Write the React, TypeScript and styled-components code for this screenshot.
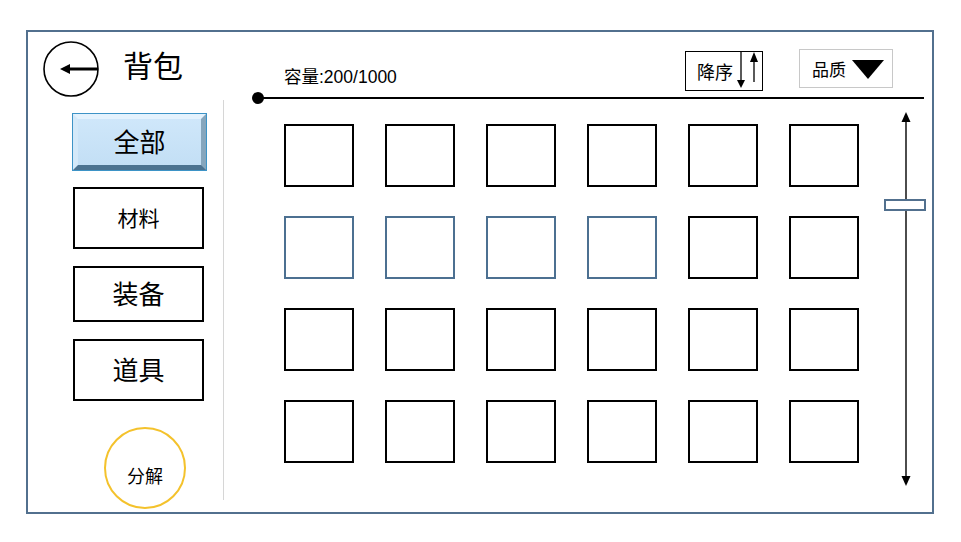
import React from "react";
import styled, { createGlobalStyle } from "styled-components";

const CJK = `"Liberation Sans", "Noto Sans CJK SC", sans-serif`;

const GlobalStyle = createGlobalStyle`
  body {
    margin: 0;
    background: #fff;
    font-family: ${CJK};
    color: #000;
  }
`;

const tabs = [
  { label: "全部", active: true, tall: false, size: 26 },
  { label: "材料", active: false, tall: true, size: 21 },
  { label: "装备", active: false, tall: false, size: 26 },
  { label: "道具", active: false, tall: true, size: 26 },
];

const cells = Array.from({ length: 24 }, (_, i) => ({
  id: i,
  highlight: i >= 6 && i <= 9,
}));

const BackIcon = () => (
  <svg width="56" height="56" viewBox="0 0 56 56">
    <circle cx="28" cy="28" r="27" fill="none" stroke="#000" strokeWidth="1.6" />
    <line x1="26" y1="28" x2="55" y2="28" stroke="#000" strokeWidth="3" />
    <polygon points="17,28 27,23 27,33" fill="#000" />
  </svg>
);

const SortArrows = () => (
  <svg width="27" height="40" viewBox="0 0 27 40">
    <line x1="6" y1="0" x2="6" y2="30" stroke="#000" strokeWidth="1.3" />
    <polygon points="2,29 10,29 6,37" fill="#000" />
    <line x1="19" y1="10" x2="19" y2="31" stroke="#000" strokeWidth="1.3" />
    <polygon points="15,11 23,11 19,1" fill="#000" />
  </svg>
);

const ScrollTrack = () => (
  <svg width="42" height="374" viewBox="0 0 42 374">
    <line x1="22" y1="8" x2="22" y2="366" stroke="#000" strokeWidth="1.4" />
    <polygon points="17.5,10 26.5,10 22,0" fill="#000" />
    <polygon points="17.5,364 26.5,364 22,374" fill="#000" />
  </svg>
);

export default function App() {
  return (
    <>
      <GlobalStyle />
      <Page>
        <Frame>
          <Sidebar>
            <Header>
              <BackIcon />
              <Title>背包</Title>
            </Header>
            <NavPanel>
              {tabs.map((t) => (
                <TabButton key={t.label} $active={t.active} $tall={t.tall} $size={t.size}>
                  {t.label}
                </TabButton>
              ))}
              <Decompose>分解</Decompose>
            </NavPanel>
          </Sidebar>
          <Main>
            <TopBar>
              <Capacity>容量:200/1000</Capacity>
              <SortBox>
                <span>降序</span>
                <SortArrows />
              </SortBox>
              <QualityBox>
                <span>品质</span>
                <Triangle />
              </QualityBox>
            </TopBar>
            <TrackRow>
              <Dot />
              <Line />
            </TrackRow>
            <Content>
              <Grid>
                {cells.map((c) => (
                  <Cell key={c.id} $highlight={c.highlight} />
                ))}
              </Grid>
              <Scroll>
                <ScrollTrack />
                <Thumb />
              </Scroll>
            </Content>
          </Main>
        </Frame>
      </Page>
    </>
  );
}

const Page = styled.div`
  padding: 30px 0 0 26px;
`;

const Frame = styled.div`
  width: 908px;
  height: 484px;
  box-sizing: border-box;
  border: 2px solid #52708e;
  display: flex;
`;

const Sidebar = styled.div`
  width: 196px;
  flex-shrink: 0;
  display: flex;
  flex-direction: column;
`;

const Header = styled.div`
  height: 68px;
  box-sizing: border-box;
  padding: 6px 0 0 15px;
  display: flex;
  align-items: center;
  gap: 24px;
`;

const Title = styled.div`
  font-size: 30px;
  line-height: 1;
  margin-top: -4px;
`;

const NavPanel = styled.div`
  height: 400px;
  box-sizing: border-box;
  border-right: 1px solid #d6d6d6;
  padding: 14px 0 0 45px;
  display: flex;
  flex-direction: column;
  align-items: flex-start;
  gap: 17px;
`;

const TabButton = styled.div<{ $active: boolean; $tall: boolean; $size: number }>`
  flex-shrink: 0;
  width: ${(p) => (p.$active ? 133 : 131)}px;
  height: ${(p) => (p.$tall ? 62 : 56)}px;
  box-sizing: border-box;
  display: flex;
  align-items: center;
  justify-content: center;
  padding-bottom: 3px;
  font-size: ${(p) => p.$size}px;
  border: 2px solid #000;
  background: #fff;
  ${(p) =>
    p.$active &&
    `
    border-width: 5px;
    border-style: solid;
    border-color: #e4f2fd #86a6bd #4c7390 #d4e9f9;
    outline: 1px solid #3d93c6;
    background: linear-gradient(#cfe7fa, #c3dff5);
  `}
`;

const Decompose = styled.div`
  flex-shrink: 0;
  width: 82px;
  height: 82px;
  box-sizing: border-box;
  margin: 9px 0 0 31px;
  border: 2px solid #f4c22c;
  border-radius: 50%;
  display: flex;
  align-items: center;
  justify-content: center;
  padding-top: 13px;
  font-size: 18px;
`;

const Main = styled.div`
  flex: 1;
  display: flex;
  flex-direction: column;
`;

const TopBar = styled.div`
  height: 60px;
  box-sizing: border-box;
  padding-right: 39px;
  display: flex;
  align-items: flex-start;
`;

const Capacity = styled.div`
  margin: 35px 0 0 60px;
  font-size: 17.5px;
  line-height: 20px;
`;

const SortBox = styled.div`
  margin: 19px 0 0 auto;
  width: 78px;
  height: 40px;
  box-sizing: border-box;
  border: 1px solid #000;
  display: flex;
  align-items: center;
  padding-left: 11px;
  font-size: 18px;
  position: relative;
  z-index: 1;
  background: #fff;

  svg {
    margin-left: auto;
    margin-top: -1px;
  }
`;

const QualityBox = styled.div`
  margin: 17px 0 0 36px;
  width: 94px;
  height: 39px;
  box-sizing: border-box;
  border: 1px solid #c8c8c8;
  display: flex;
  align-items: center;
  padding-left: 12px;
  gap: 6px;
  font-size: 17px;
`;

const Triangle = styled.div`
  width: 0;
  height: 0;
  border-left: 16px solid transparent;
  border-right: 16px solid transparent;
  border-top: 19px solid #000;
  margin-top: 2px;
`;

const TrackRow = styled.div`
  height: 12px;
  display: flex;
  align-items: center;
  margin: 0 8px 0 28px;
`;

const Dot = styled.div`
  width: 12px;
  height: 12px;
  border-radius: 50%;
  background: #000;
  flex-shrink: 0;
`;

const Line = styled.div`
  flex: 1;
  height: 1.4px;
  background: #000;
  margin-left: -6px;
`;

const Content = styled.div`
  display: flex;
  align-items: flex-start;
  padding-left: 60px;
`;

const Grid = styled.div`
  margin-top: 20px;
  display: grid;
  grid-template-columns: repeat(6, 70px);
  grid-template-rows: 63px 63px 63px 63px;
  grid-template-areas: none;
  column-gap: 31px;
  row-gap: 29px;
`;

const Cell = styled.div<{ $highlight: boolean }>`
  box-sizing: border-box;
  border: 2px solid ${(p) => (p.$highlight ? "#4c7091" : "#000")};
`;

const Scroll = styled.div`
  margin: 8px 0 0 25px;
  width: 42px;
  height: 374px;
  position: relative;

  svg {
    display: block;
  }
`;

const Thumb = styled.div`
  position: absolute;
  top: 87px;
  left: 0;
  width: 42px;
  height: 12px;
  box-sizing: border-box;
  border: 2px solid #52708e;
  background: #fff;
`;
